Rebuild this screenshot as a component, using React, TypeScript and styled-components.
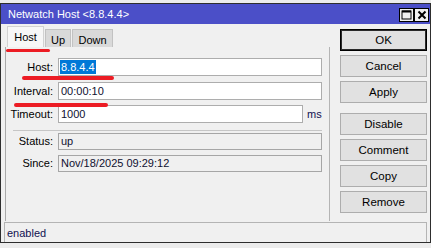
import React from "react";
import styled, { createGlobalStyle } from "styled-components";

const GlobalStyle = createGlobalStyle`
  html, body {
    margin: 0;
    padding: 0;
    background: #ececec;
  }
  body {
    font-family: "Liberation Sans", Arial, sans-serif;
    font-size: 11px;
    color: #000;
  }
`;

const Window = styled.div`
  position: relative;
  box-sizing: border-box;
  margin-top: 3px;
  width: 431px;
  height: 240px;
  border: 1px solid #2e2e2e;
  background: #f0f0f0;
  display: flex;
  flex-direction: column;
`;

const TitleBar = styled.div`
  height: 20px;
  flex: none;
  background: #4b4fc8;
  color: #fff;
  display: flex;
  align-items: center;
  justify-content: space-between;
  padding: 0 1px 0 7px;
  font-size: 11px;
`;

const TitleButtons = styled.div`
  display: flex;
  margin-top: 1px;
`;

const TitleButton = styled.div`
  box-sizing: border-box;
  width: 15px;
  height: 14px;
  border: 1px solid #000;
  background: #f0f0f0;
  display: flex;
  align-items: center;
  justify-content: center;
`;

const Main = styled.div`
  flex: 1;
  display: flex;
  min-height: 0;
`;

const LeftArea = styled.div`
  width: 329px;
  padding: 2px 0 1px 4px;
  box-sizing: border-box;
  display: flex;
  flex-direction: column;
`;

const Tabs = styled.div`
  display: flex;
  align-items: flex-end;
  gap: 1px;
  height: 21px;
  padding-left: 2px;
`;

const Tab = styled.div<{ $active?: boolean; $w: number }>`
  box-sizing: border-box;
  width: ${(p) => p.$w}px;
  height: ${(p) => (p.$active ? 21 : 18)}px;
  padding-top: ${(p) => (p.$active ? 0 : 2)}px;
  background: ${(p) => (p.$active ? "#f7f7f7" : "#d9d9d9")};
  border: 1px solid ${(p) => (p.$active ? "#d2d2d2" : "#c2c2c2")};
  border-bottom: none;
  display: flex;
  align-items: center;
  justify-content: center;
`;

const Panel = styled.div`
  flex: 1;
  box-sizing: border-box;
  border-left: 1px solid #a9a9a9;
  border-right: 1px solid #b4b4b4;
  padding: 11px 7px 0 0;
`;

const Form = styled.div`
  display: grid;
  grid-template-columns: 47px 1fr;
  column-gap: 5px;
  row-gap: 5.5px;
  align-items: center;
`;

const Label = styled.div`
  text-align: right;
  white-space: nowrap;
`;

const Field = styled.div<{ $readOnly?: boolean }>`
  box-sizing: border-box;
  height: ${(p) => (p.$readOnly ? 17 : 18)}px;
  border: 1px solid ${(p) => (p.$readOnly ? "#a6a6a6" : "#adadad")};
  background: ${(p) => (p.$readOnly ? "#f0f0f0" : "#fff")};
  padding-left: 2px;
  display: flex;
  align-items: center;
  color: #101030;
  flex: 1;
  white-space: nowrap;
`;

const Selected = styled.span`
  background: #0078d7;
  color: #fff;
  margin-left: -1px;
  padding: 0 1px;
  line-height: 14px;
`;

const FieldWithUnit = styled.div`
  display: flex;
  align-items: center;
`;

const Unit = styled.span`
  width: 19px;
  padding-left: 4px;
  box-sizing: border-box;
  color: #101050;
`;

const Divider = styled.div`
  grid-column: 1 / 3;
  height: 1px;
  background: #c6c6c6;
  margin: 1px 0 2px 7px;
`;

const StatusForm = styled(Form)`
  row-gap: 5px;
`;

const ButtonColumn = styled.div`
  flex: 1;
  padding: 5px 0 0 10px;
  display: flex;
  flex-direction: column;
  gap: 4px;
`;

const Button = styled.div<{ $primary?: boolean; $spaced?: boolean }>`
  box-sizing: border-box;
  width: 87px;
  height: 22px;
  flex: none;
  background: #e1e1e1;
  border: 1px solid ${(p) => (p.$primary ? "#000" : "#adadad")};
  box-shadow: ${(p) => (p.$primary ? "inset 0 0 0 1px #2a2a2a" : "none")};
  margin-top: ${(p) => (p.$spaced ? 6 : 0)}px;
  display: flex;
  align-items: center;
  justify-content: center;
  font-size: 11.5px;
`;

const StatusBar = styled.div`
  height: 20px;
  flex: none;
  box-sizing: border-box;
  margin: 0 3px;
  border: 1px solid #b4b4b4;
  border-bottom: none;
  padding-left: 2px;
  display: flex;
  align-items: center;
  color: #101050;
`;

const Mark = styled.div<{ $x: number; $y: number; $w: number }>`
  position: absolute;
  left: ${(p) => p.$x}px;
  top: ${(p) => p.$y}px;
  width: ${(p) => p.$w}px;
  height: 3.5px;
  border-radius: 2px;
  background: #ec1c24;
`;

export default function App() {
  return (
    <>
      <GlobalStyle />
      <Window>
        <TitleBar>
          <span>Netwatch Host &lt;8.8.4.4&gt;</span>
          <TitleButtons>
            <TitleButton>
              <svg width="11" height="10" viewBox="0 0 11 10">
                <rect x="1" y="1" width="9" height="8" fill="none" stroke="#000" strokeWidth="1" />
                <rect x="1" y="0.5" width="9" height="2" fill="#000" />
              </svg>
            </TitleButton>
            <TitleButton>
              <svg width="10" height="10" viewBox="0 0 10 10">
                <path d="M1.5 1.5 L8.5 8.5 M8.5 1.5 L1.5 8.5" stroke="#000" strokeWidth="2" />
              </svg>
            </TitleButton>
          </TitleButtons>
        </TitleBar>
        <Main>
          <LeftArea>
            <Tabs>
              <Tab $active $w={37}>Host</Tab>
              <Tab $w={26}>Up</Tab>
              <Tab $w={41}>Down</Tab>
            </Tabs>
            <Panel>
              <Form>
                <Label>Host:</Label>
                <Field>
                  <Selected>8.8.4.4</Selected>
                </Field>
                <Label>Interval:</Label>
                <Field>00:00:10</Field>
                <Label>Timeout:</Label>
                <FieldWithUnit>
                  <Field>1000</Field>
                  <Unit>ms</Unit>
                </FieldWithUnit>
                <Divider />
              </Form>
              <StatusForm>
                <Label>Status:</Label>
                <Field $readOnly>up</Field>
                <Label>Since:</Label>
                <Field $readOnly>Nov/18/2025 09:29:12</Field>
              </StatusForm>
            </Panel>
          </LeftArea>
          <ButtonColumn>
            <Button $primary>OK</Button>
            <Button>Cancel</Button>
            <Button>Apply</Button>
            <Button $spaced>Disable</Button>
            <Button>Comment</Button>
            <Button>Copy</Button>
            <Button>Remove</Button>
          </ButtonColumn>
        </Main>
        <StatusBar>enabled</StatusBar>
        <Mark $x={5} $y={44.5} $w={44} />
        <Mark $x={21} $y={72} $w={92} />
        <Mark $x={13} $y={99} $w={94} />
      </Window>
    </>
  );
}
